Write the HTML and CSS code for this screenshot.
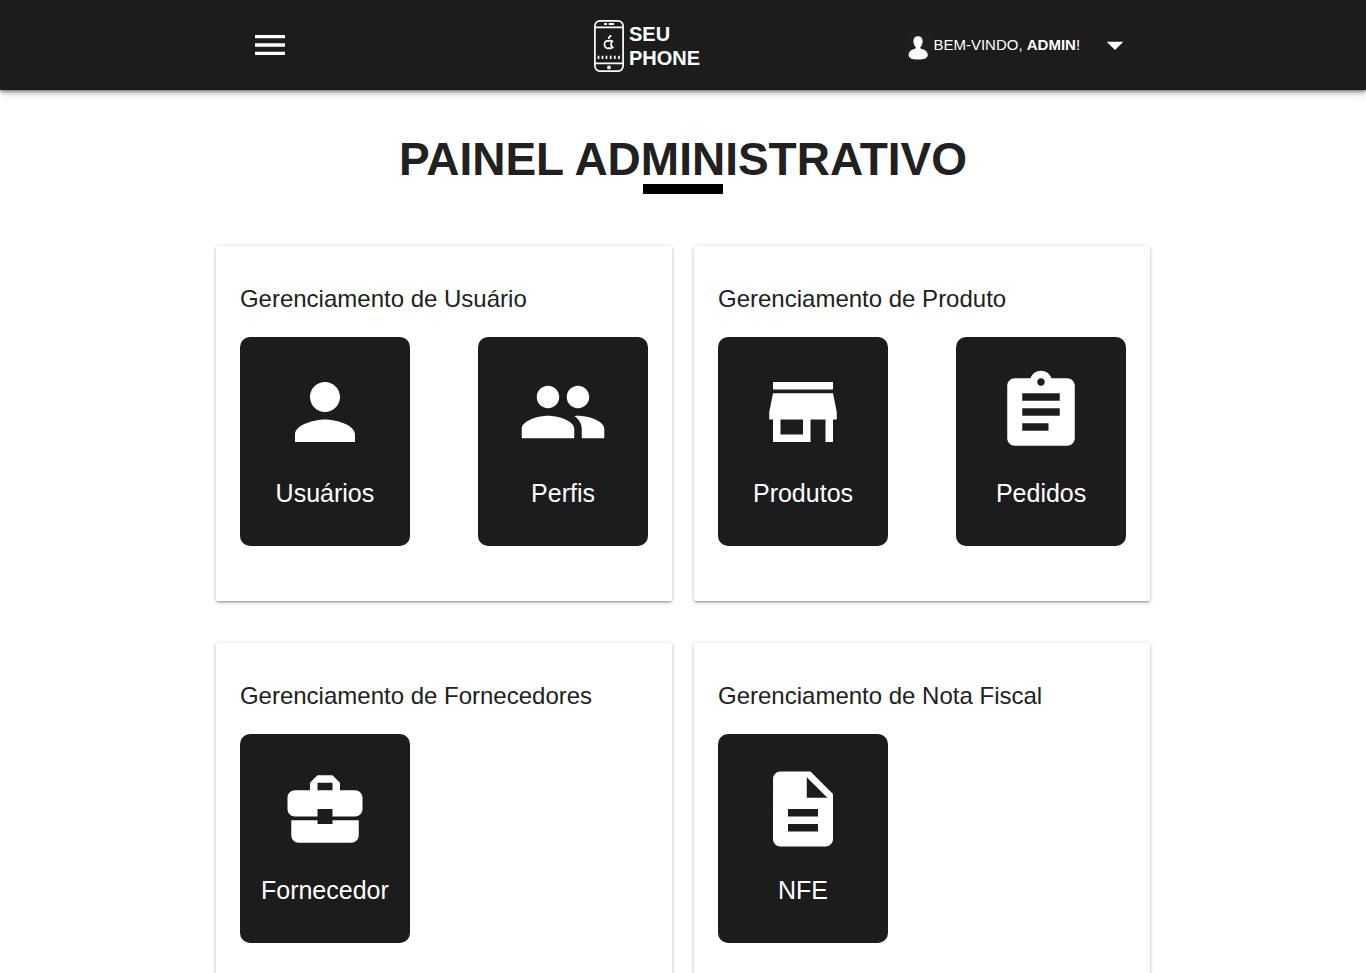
FILE: index.html
```html
<!DOCTYPE html>
<html lang="pt-BR">
<head>
<meta charset="utf-8">
<meta name="viewport" content="width=device-width, initial-scale=1">
<title>Painel Administrativo</title>
<link rel="stylesheet" href="styles.css">
</head>
<body>
<header class="topbar">
  <nav class="topbar-inner">
    <button class="menu-button" type="button" aria-label="Menu">
      <svg class="bar-icon" viewBox="0 0 24 24"><path d="M3 18h18v-2H3v2zm0-5h18v-2H3v2zm0-7v2h18V6H3z"/></svg>
    </button>
    <a class="brand" href="#">
      <svg class="brand-phone" viewBox="0 0 30 52" fill="none" stroke="#fff" stroke-width="1.7">
        <rect x="0.9" y="0.9" width="28.200" height="50.200" rx="5"/>
        <path d="M1 7.300h28M1 43.300h28"/>
        <path d="M10 4.100h3M14.700 4.100h5.300" stroke-width="2"/>
        <path d="M4.500 35.800v3.200M8.500 35.800v3.200M12.500 35.800v3.200M16.700 35.800v3.200M20.800 35.800v3.200M25 35.800v3.200"/>
        <path d="M18.300 21.300c-1.500-1-2.700-.7-3.700-.2-2.800-.7-4.400 1.100-4.100 3.700.3 2.600 2 4 4.200 3.300 1.400.5 2.600.3 3.900-.8-2-1.400-2.200-4.300-.3-6z" stroke-width="1.700"/>
        <path d="M14.700 19c0-1.700.8-2.700 2.600-3.400" stroke-width="1.800"/>
        <circle cx="15" cy="47.400" r="1.900" fill="#fff" stroke="none"/>
      </svg>
      <span class="brand-name">SEU<br>PHONE</span>
    </a>
    <button class="user-menu" type="button">
      <svg class="avatar" viewBox="0 0 30 30">
        <circle cx="15" cy="15" r="15" fill="#1f1f1f"/>
        <path d="M15 6.300c3 0 4.700 1.900 4.600 5-.1 2.600-.9 4.600-2.200 5.700v1.200c.5 1 6.900 1 7.400 6.500.1 3.200-3.600 4.900-9.800 4.900s-9.500-1.700-9.400-4.900c.5-5.500 6.600-5.500 7.100-6.500V17c-1.300-1.100-2.200-3.100-2.300-5.700-.1-3.100 1.600-5 4.600-5z"/>
      </svg>
      <span class="welcome">BEM-VINDO, <b>ADMIN</b>!</span>
      <svg class="bar-icon" viewBox="0 0 24 24"><path d="M7 10l5 5 5-5z"/></svg>
    </button>
  </nav>
</header>

<main class="page">
  <h1 class="page-title">PAINEL ADMINISTRATIVO</h1>
  <div class="cards">
    <section class="card">
      <h2 class="card-title">Gerenciamento de Usuário</h2>
      <div class="tiles">
        <a class="tile" href="#">
          <svg class="tile-icon" viewBox="0 0 24 24"><path d="M12 12c2.210 0 4-1.790 4-4s-1.790-4-4-4-4 1.790-4 4 1.790 4 4 4zm0 2c-2.670 0-8 1.340-8 4v2h16v-2c0-2.660-5.330-4-8-4z"/></svg>
          <span>Usuários</span>
        </a>
        <a class="tile" href="#">
          <svg class="tile-icon" viewBox="0 0 24 24"><path d="M16 11c1.660 0 2.990-1.340 2.990-3S17.660 5 16 5c-1.660 0-3 1.340-3 3s1.340 3 3 3zm-8 0c1.660 0 2.990-1.340 2.990-3S9.660 5 8 5C6.340 5 5 6.340 5 8s1.340 3 3 3zm0 2c-2.330 0-7 1.170-7 3.500V19h14v-2.500c0-2.330-4.670-3.500-7-3.500zm8 0c-.29 0-.62.020-.97.050 1.160.84 1.970 1.970 1.970 3.450V19h6v-2.500c0-2.330-4.670-3.500-7-3.500z"/></svg>
          <span>Perfis</span>
        </a>
      </div>
    </section>
    <section class="card">
      <h2 class="card-title">Gerenciamento de Produto</h2>
      <div class="tiles">
        <a class="tile" href="#">
          <svg class="tile-icon" viewBox="0 0 24 24"><path d="M20 4H4v2h16V4zm1 10v-2l-1-5H4l-1 5v2h1v6h10v-6h4v6h2v-6h1zm-9 4H6v-4h6v4z"/></svg>
          <span>Produtos</span>
        </a>
        <a class="tile" href="#">
          <svg class="tile-icon" viewBox="0 0 24 24"><path d="M19 3h-4.180C14.400 1.840 13.300 1 12 1c-1.300 0-2.400.84-2.820 2H5c-1.100 0-2 .9-2 2v14c0 1.100.9 2 2 2h14c1.100 0 2-.9 2-2V5c0-1.100-.9-2-2-2zm-7 0c.55 0 1 .45 1 1s-.45 1-1 1-1-.45-1-1 .45-1 1-1zm2 14H7v-2h7v2zm3-4H7v-2h10v2zm0-4H7V7h10v2z"/></svg>
          <span>Pedidos</span>
        </a>
      </div>
    </section>
    <section class="card">
      <h2 class="card-title">Gerenciamento de Fornecedores</h2>
      <div class="tiles">
        <a class="tile" href="#">
          <svg class="tile-icon" viewBox="0 0 24 24"><path d="M10 16v-1H3.010L3 19c0 1.110.89 2 2 2h14c1.110 0 2-.89 2-2v-4h-7v1h-4zm10-9h-4.010V5l-2-2h-4l-2 2v2H4c-1.100 0-2 .9-2 2v3c0 1.110.89 2 2 2h6v-2h4v2h6c1.100 0 2-.9 2-2V9c0-1.100-.9-2-2-2zm-6 0h-4V5h4v2z"/></svg>
          <span>Fornecedor</span>
        </a>
      </div>
    </section>
    <section class="card">
      <h2 class="card-title">Gerenciamento de Nota Fiscal</h2>
      <div class="tiles">
        <a class="tile" href="#">
          <svg class="tile-icon" viewBox="0 0 24 24"><path d="M14 2H6c-1.100 0-1.990.9-1.990 2L4 20c0 1.100.89 2 1.990 2H18c1.100 0 2-.9 2-2V8l-6-6zm2 16H8v-2h8v2zm0-4H8v-2h8v2zm-3-5V3.500L18.500 9H13z"/></svg>
          <span>NFE</span>
        </a>
      </div>
    </section>
  </div>
</main>
</body>
</html>
```
FILE: styles.css
```css
*, *::before, *::after {
  box-sizing: border-box;
}

body {
  margin: 0;
  background: #fff;
  color: #212121;
  font-family: "Liberation Sans", Arial, sans-serif;
  font-size: 15px;
}

button {
  border: 0;
  background: none;
  color: inherit;
  font: inherit;
  cursor: pointer;
}

a {
  color: inherit;
  text-decoration: none;
}

svg {
  display: block;
  flex: none;
}

.topbar {
  background: #1c1c1c;
  color: #fff;
  box-shadow: 0 2px 2px 0 rgba(0, 0, 0, 0.14),
    0 3px 1px -2px rgba(0, 0, 0, 0.12),
    0 1px 5px 0 rgba(0, 0, 0, 0.2),
    0 2px 8px 0 rgba(0, 0, 0, 0.3);
}

.topbar-inner {
  display: grid;
  grid-template-columns: 1fr 178px 1fr;
  align-items: center;
  width: 70%;
  min-height: 90px;
  margin: 0 auto;
}

.menu-button {
  justify-self: start;
  padding: 0 45px;
}

.bar-icon {
  width: 40px;
  height: 40px;
  fill: #fff;
}

.brand {
  display: flex;
  align-items: center;
  gap: 5px;
  padding-top: 2px;
}

.brand-phone {
  width: 30px;
  height: 52px;
}

.brand-name {
  font-size: 20px;
  font-weight: bold;
  line-height: 24px;
}

.user-menu {
  display: flex;
  align-items: center;
  justify-self: end;
  padding: 0 26px 0 0;
  white-space: nowrap;
}

.avatar {
  width: 30px;
  height: 30px;
  fill: #fff;
}

.welcome {
  margin-right: 15px;
  padding-bottom: 2px;
}

.page {
  width: 70%;
  margin: 0 auto;
  padding: 44px 11px 42px;
}

.page-title {
  margin: 0 0 52px;
  font-size: 46px;
  line-height: 50px;
  text-align: center;
}

.page-title::after {
  content: "";
  display: block;
  width: 80px;
  height: 10px;
  margin: 0 auto;
  background: #000;
}

.cards {
  display: grid;
  grid-template-columns: 1fr 1fr;
  gap: 42px 22px;
}

.card {
  padding: 37px 24px 55px;
  border-radius: 2px;
  background: #fff;
  box-shadow: 0 2px 2px 0 rgba(0, 0, 0, 0.14),
    0 3px 1px -2px rgba(0, 0, 0, 0.12),
    0 1px 5px 0 rgba(0, 0, 0, 0.2);
}

.card-title {
  margin: 0 0 22px;
  font-size: 24px;
  font-weight: normal;
  line-height: 32px;
}

.tiles {
  display: flex;
  justify-content: space-between;
}

.tile {
  display: flex;
  flex-direction: column;
  align-items: center;
  gap: 18px;
  width: 170px;
  padding: 30px 20px 35px;
  border-radius: 10px;
  background: #1c1c1c;
  color: #fff;
  font-size: 25px;
  line-height: 36px;
}

.tile-icon {
  width: 90px;
  height: 90px;
  fill: #fff;
}
```
